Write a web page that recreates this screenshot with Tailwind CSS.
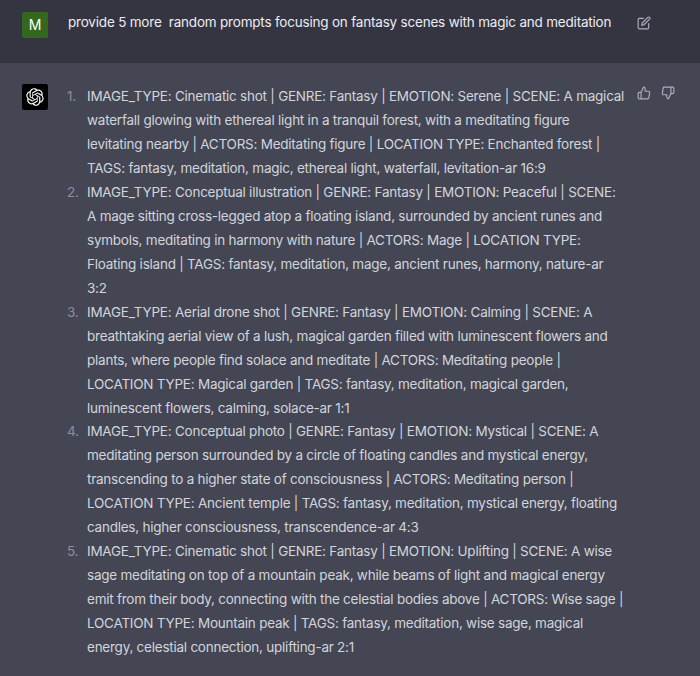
<!DOCTYPE html>
<html lang="en">
<head>
  <meta charset="UTF-8" />
  <title>Chat</title>
  <script src="https://cdn.jsdelivr.net/npm/@tailwindcss/browser@4"></script>
</head>
<body class="bg-[#444654] font-['Inter','Liberation_Sans',sans-serif] text-[13.5px] font-[430] leading-6 overflow-hidden">
  <!-- user prompt -->
  <div class="flex h-[63px] bg-[#343541] border-b border-[#2f3039] pl-[22px] pt-[10px] text-[#ececf1] tracking-[-0.2px]">
    <div class="flex items-center justify-center w-[26px] h-[26px] mt-[2px] rounded-[2px] bg-[#33691e] text-white text-[14px]">M</div>
    <p class="ml-[20px] w-[569px] whitespace-pre">provide 5 more  random prompts focusing on fantasy scenes with magic and meditation</p>
    <svg class="mt-[6px] w-[14px] h-[14px] text-[#acacbe]" viewBox="0 0 24 24" fill="none" stroke="currentColor" stroke-width="2" stroke-linecap="round" stroke-linejoin="round"><path d="M11 4H4a2 2 0 0 0-2 2v14a2 2 0 0 0 2 2h14a2 2 0 0 0 2-2v-7"/><path d="M18.5 2.5a2.121 2.121 0 0 1 3 3L12 15l-4 1 1-4 9.5-9.5z"/></svg>
  </div>

  <!-- answer -->
  <div class="flex pl-[22px] pt-[21px] text-[#d1d5db] tracking-[-0.24px]">
    <div class="flex items-center justify-center w-[26px] h-[26px] rounded-[2px] bg-black text-white">
      <svg class="w-[18px] h-[18px]" viewBox="0 0 41 41" fill="currentColor"><path d="M37.5324 16.8707C37.9808 15.5241 38.1363 14.0974 37.9886 12.6859C37.8409 11.2744 37.3934 9.91076 36.676 8.68622C35.6126 6.83404 33.9882 5.3676 32.0373 4.4985C30.0864 3.62941 27.9098 3.40259 25.8215 3.85078C24.8796 2.7893 23.7219 1.94125 22.4257 1.36341C21.1295 0.785575 19.7249 0.491269 18.3058 0.500197C16.1708 0.495044 14.0893 1.16803 12.3614 2.42214C10.6335 3.67624 9.34853 5.44666 8.6917 7.47815C7.30085 7.76286 5.98686 8.3414 4.8377 9.17505C3.68854 10.0087 2.73073 11.0782 2.02839 12.312C0.956464 14.1591 0.498905 16.2988 0.721698 18.4228C0.944492 20.5467 1.83612 22.5449 3.268 24.1293C2.81966 25.4759 2.66413 26.9026 2.81182 28.3141C2.95951 29.7256 3.40701 31.0892 4.12437 32.3138C5.18791 34.1659 6.8123 35.6322 8.76321 36.5013C10.7141 37.3704 12.8907 37.5973 14.9789 37.1492C15.9208 38.2107 17.0786 39.0587 18.3747 39.6366C19.6709 40.2144 21.0755 40.5087 22.4946 40.4998C24.6307 40.5054 26.7133 39.8321 28.4418 38.5772C30.1704 37.3223 31.4556 35.5506 32.1119 33.5179C33.5027 33.2332 34.8167 32.6547 35.9659 31.821C37.115 30.9874 38.0728 29.9178 38.7752 28.684C39.8458 26.8371 40.3023 24.6979 40.0789 22.5748C39.8556 20.4517 38.9639 18.4544 37.5324 16.8707ZM22.4978 37.8849C20.7443 37.8874 19.0459 37.2733 17.6994 36.1501C17.7601 36.117 17.8666 36.0586 17.936 36.0161L25.9004 31.4156C26.1003 31.3019 26.2663 31.137 26.3813 30.9378C26.4964 30.7386 26.5563 30.5124 26.5549 30.2825V19.0542L29.9213 20.998C29.9389 21.0068 29.9541 21.0198 29.9656 21.0359C29.977 21.052 29.9842 21.0707 29.9867 21.0902V30.3889C29.9842 32.375 29.1946 34.2791 27.7909 35.6841C26.3872 37.0892 24.4838 37.8806 22.4978 37.8849ZM6.39227 31.0064C5.51397 29.4888 5.19742 27.7107 5.49804 25.9832C5.55718 26.0187 5.66048 26.0818 5.73461 26.1244L13.699 30.7248C13.8975 30.8408 14.1233 30.902 14.3532 30.902C14.583 30.902 14.8088 30.8408 15.0073 30.7248L24.731 25.1103V28.9979C24.7321 29.0177 24.7283 29.0376 24.7199 29.0556C24.7115 29.0736 24.6988 29.0893 24.6829 29.1012L16.6317 33.7497C14.9096 34.7416 12.8643 35.0097 10.9447 34.4954C9.02506 33.9811 7.38785 32.7263 6.39227 31.0064ZM4.29707 13.6194C5.17156 12.0998 6.55279 10.9364 8.19885 10.3327C8.19885 10.4013 8.19491 10.5228 8.19491 10.6071V19.808C8.19351 20.0378 8.25334 20.2638 8.36823 20.4629C8.48312 20.6619 8.64893 20.8267 8.84863 20.9404L18.5723 26.5542L15.206 28.4979C15.1894 28.5089 15.1703 28.5155 15.1505 28.5173C15.1307 28.5191 15.1107 28.516 15.0924 28.5082L7.04046 23.8557C5.32135 22.8601 4.06716 21.2235 3.55289 19.3046C3.03862 17.3858 3.30624 15.3413 4.29707 13.6194ZM31.955 20.0556L22.2312 14.4411L25.5976 12.4981C25.6142 12.4872 25.6333 12.4805 25.6531 12.4787C25.6729 12.4769 25.6928 12.4801 25.7111 12.4879L33.7631 17.1364C34.9967 17.849 36.0017 18.8982 36.6606 20.1613C37.3194 21.4244 37.6047 22.849 37.4832 24.2684C37.3617 25.6878 36.8382 27.0432 35.9743 28.1759C35.1103 29.3086 33.9415 30.1717 32.6047 30.6641C32.6047 30.5947 32.6047 30.4733 32.6047 30.3889V21.188C32.6066 20.9586 32.5474 20.7328 32.4332 20.5338C32.319 20.3348 32.154 20.1698 31.955 20.0556ZM35.3055 15.0128C35.2464 14.9765 35.1431 14.9142 35.069 14.8717L27.1045 10.2712C26.906 10.1554 26.6803 10.0943 26.4504 10.0943C26.2206 10.0943 25.9948 10.1554 25.7963 10.2712L16.0726 15.8858V11.9982C16.0715 11.9783 16.0753 11.9585 16.0837 11.9405C16.0921 11.9225 16.1048 11.9068 16.1207 11.8949L24.1719 7.25025C25.4053 6.53903 26.8158 6.19376 28.2383 6.25482C29.6608 6.31589 31.0364 6.78077 32.2044 7.59508C33.3723 8.40939 34.2842 9.53945 34.8334 10.8531C35.3826 12.1667 35.5464 13.6095 35.3055 15.0128ZM14.2424 21.9419L10.8752 19.9981C10.8576 19.9893 10.8423 19.9763 10.8309 19.9602C10.8195 19.9441 10.8122 19.9254 10.8098 19.9058V10.6071C10.8107 9.18295 11.2173 7.78848 11.9819 6.58696C12.7466 5.38544 13.8377 4.42659 15.1275 3.82264C16.4173 3.21869 17.8524 2.99464 19.2649 3.1767C20.6775 3.35876 22.0089 3.93941 23.1034 4.85067C23.0427 4.88379 22.937 4.94215 22.8668 4.98473L14.9024 9.58517C14.7025 9.69878 14.5366 9.86356 14.4215 10.0626C14.3065 10.2616 14.2466 10.4877 14.2479 10.7175L14.2424 21.9419ZM16.071 17.9991L20.4018 15.4978L24.7325 17.9975V22.9985L20.4018 25.4983L16.071 22.9985V17.9991Z"/></svg>
    </div>
    <ol class="ml-[19px] w-[570px] whitespace-nowrap">
      <li class="flex"><span class="w-[20px] shrink-0 text-[#8e8ea0]">1.</span><p>IMAGE_TYPE: Cinematic shot | GENRE: Fantasy | EMOTION: Serene | SCENE: A magical<br>waterfall glowing with ethereal light in a tranquil forest, with a meditating figure<br>levitating nearby | ACTORS: Meditating figure | LOCATION TYPE: Enchanted forest |<br>TAGS: fantasy, meditation, magic, ethereal light, waterfall, levitation-ar 16:9</p></li>
      <li class="flex"><span class="w-[20px] shrink-0 text-[#8e8ea0]">2.</span><p>IMAGE_TYPE: Conceptual illustration | GENRE: Fantasy | EMOTION: Peaceful | SCENE:<br>A mage sitting cross-legged atop a floating island, surrounded by ancient runes and<br>symbols, meditating in harmony with nature | ACTORS: Mage | LOCATION TYPE:<br>Floating island | TAGS: fantasy, meditation, mage, ancient runes, harmony, nature-ar<br>3:2</p></li>
      <li class="flex"><span class="w-[20px] shrink-0 text-[#8e8ea0]">3.</span><p>IMAGE_TYPE: Aerial drone shot | GENRE: Fantasy | EMOTION: Calming | SCENE: A<br>breathtaking aerial view of a lush, magical garden filled with luminescent flowers and<br>plants, where people find solace and meditate | ACTORS: Meditating people |<br>LOCATION TYPE: Magical garden | TAGS: fantasy, meditation, magical garden,<br>luminescent flowers, calming, solace-ar 1:1</p></li>
      <li class="flex mt-[-1px]"><span class="w-[20px] shrink-0 text-[#8e8ea0]">4.</span><p>IMAGE_TYPE: Conceptual photo | GENRE: Fantasy | EMOTION: Mystical | SCENE: A<br>meditating person surrounded by a circle of floating candles and mystical energy,<br>transcending to a higher state of consciousness | ACTORS: Meditating person |<br>LOCATION TYPE: Ancient temple | TAGS: fantasy, meditation, mystical energy, floating<br>candles, higher consciousness, transcendence-ar 4:3</p></li>
      <li class="flex"><span class="w-[20px] shrink-0 text-[#8e8ea0]">5.</span><p>IMAGE_TYPE: Cinematic shot | GENRE: Fantasy | EMOTION: Uplifting | SCENE: A wise<br>sage meditating on top of a mountain peak, while beams of light and magical energy<br>emit from their body, connecting with the celestial bodies above | ACTORS: Wise sage |<br>LOCATION TYPE: Mountain peak | TAGS: fantasy, meditation, wise sage, magical<br>energy, celestial connection, uplifting-ar 2:1</p></li>
    </ol>
    <div class="flex gap-[10px] mt-[2px] text-[#acacbe]">
      <svg class="w-[14px] h-[14px]" viewBox="0 0 24 24" fill="none" stroke="currentColor" stroke-width="2" stroke-linecap="round" stroke-linejoin="round"><path d="M14 9V5a3 3 0 0 0-3-3l-4 9v11h11.28a2 2 0 0 0 2-1.7l1.38-9a2 2 0 0 0-2-2.3zM7 22H4a2 2 0 0 1-2-2v-7a2 2 0 0 1 2-2h3"/></svg>
      <svg class="w-[14px] h-[14px]" viewBox="0 0 24 24" fill="none" stroke="currentColor" stroke-width="2" stroke-linecap="round" stroke-linejoin="round"><path d="M10 15v4a3 3 0 0 0 3 3l4-9V2H5.72a2 2 0 0 0-2 1.7l-1.38 9a2 2 0 0 0 2 2.3zm7-13h2.67A2.31 2.31 0 0 1 22 4v7a2.31 2.31 0 0 1-2.33 2H17"/></svg>
    </div>
  </div>
</body>
</html>
